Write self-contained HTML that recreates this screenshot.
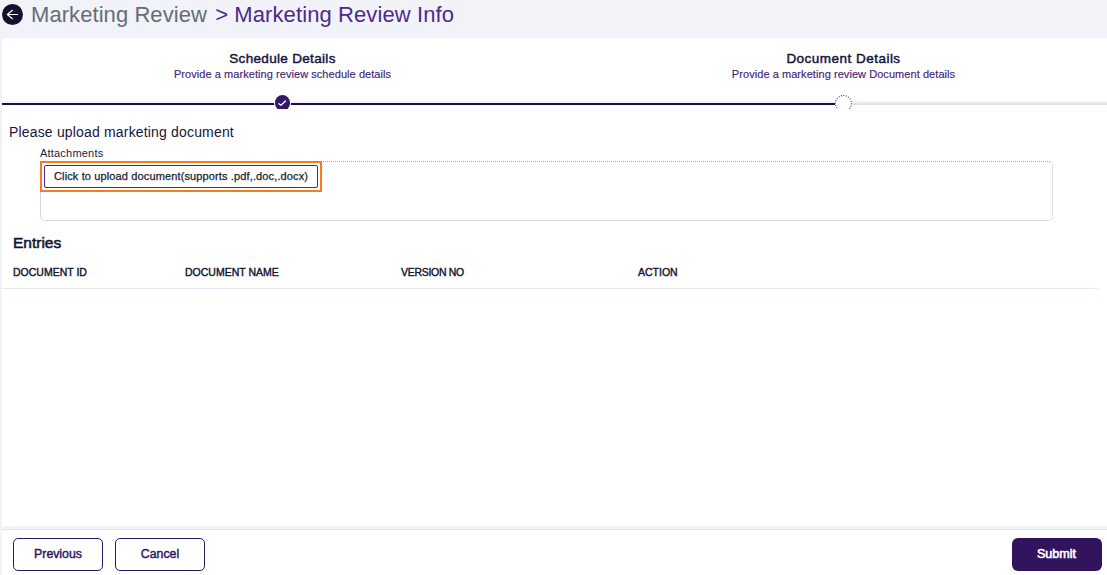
<!DOCTYPE html>
<html>
<head>
<meta charset="utf-8">
<style>
html,body{margin:0;padding:0;}
body{width:1107px;height:575px;overflow:hidden;position:relative;background:#f1f3f8;font-family:"Liberation Sans",sans-serif;}
.abs{position:absolute;}
.back{left:2px;top:4px;width:21px;height:21px;border-radius:50%;background:#12112e;}
.title{left:31px;top:0px;font-size:22px;line-height:30px;color:#676c78;white-space:nowrap;letter-spacing:0.07px;}
.title .p{color:#4d2a8c;margin-left:2px;letter-spacing:0.1px;}
.card{left:2px;top:38px;width:1122px;height:488px;background:#fff;border-radius:4px 0 0 0;overflow:hidden;}
.step{position:absolute;top:0;width:561px;text-align:center;}
.step h3{margin:0;position:absolute;left:0;right:0;font-weight:normal;-webkit-text-stroke:0.45px #15143a;font-size:13.5px;letter-spacing:0.32px;line-height:16px;top:13px;color:#15143a;}
.step p{margin:0;position:absolute;left:0;right:0;font-size:11px;line-height:13px;top:30px;color:#432573;letter-spacing:0.06px;-webkit-text-stroke:0.15px #432573;}
.stepper{left:0;top:0;width:1122px;height:71px;overflow:hidden;}
.track{left:0;top:63px;width:1122px;height:2px;background:#f1f3f8;}
.track2{left:0;top:65px;width:1122px;height:2px;background:#e1e1eb;}
.prog{left:0;top:65px;height:2px;background:#1e0a4c;}
.chk{left:272.5px;top:57px;width:15.5px;height:16px;border-radius:50%;background:#33176b;box-shadow:0 0 0 1px #fff;}
.dash{left:832px;top:56px;width:19px;height:19px;}
.txt1{left:7px;top:86px;font-size:14px;letter-spacing:0.17px;color:#17163a;white-space:nowrap;line-height:17px;}
.att{left:38px;top:109px;font-size:11px;letter-spacing:0.2px;color:#22213f;white-space:nowrap;line-height:13px;}
.dz{left:38px;top:123px;width:1011px;height:58px;border:1px dotted #a8a8b8;border-right-color:#bcbcca;border-bottom-color:#bcbcca;border-left:1px solid #d8d8e2;border-radius:5px;}
.ring{left:38px;top:123px;width:278px;height:26.5px;border:2px solid #f97a1f;}
.upbtn{left:42px;top:127px;width:272px;height:21px;border:1px solid #4c2792;border-radius:2px;background:#fff;}
.uptxt{left:52px;top:132px;font-size:11px;letter-spacing:0.13px;color:#1b1b2e;-webkit-text-stroke:0.25px #1b1b2e;white-space:nowrap;line-height:13px;}
.entries{left:11px;top:196px;font-size:15.5px;font-weight:normal;-webkit-text-stroke:0.55px #151432;color:#151432;line-height:18px;}
.th{top:228px;font-size:10.5px;font-weight:normal;-webkit-text-stroke:0.4px #151432;color:#151432;line-height:12px;white-space:nowrap;}
.tline{left:0;top:250px;width:1096px;height:1px;background:#e7e5f6;}
.footer{left:2px;top:529px;width:1122px;height:60px;background:#fff;border-top:1px solid #e4e4f7;}
.btn{top:538px;width:88px;height:30.5px;border:1.5px solid #2e1863;border-radius:5px;background:#fff;color:#2e1863;font-weight:normal;-webkit-text-stroke:0.45px #2e1863;font-size:12.3px;text-align:center;line-height:30.5px;text-indent:0px;}
.sub{left:1012px;top:538px;width:90px;height:33px;border-radius:6px;background:#32135e;color:#fff;font-weight:normal;-webkit-text-stroke:0.6px #fff;font-size:12.6px;text-align:center;line-height:33px;text-indent:-1px;}
</style>
</head>
<body>
<div class="abs back"><svg width="21" height="21" viewBox="0 0 21 21"><path d="M15.6 10.5H5.6M10.4 6.3L5.3 10.5L10.4 14.7" stroke="#fff" stroke-width="1.15" fill="none" stroke-linecap="round" stroke-linejoin="round"/></svg></div>
<div class="abs title">Marketing Review <span class="p">&gt; Marketing Review Info</span></div>
<div class="abs card">
  <div class="step" style="left:0"><h3>Schedule Details</h3><p>Provide a marketing review schedule details</p></div>
  <div class="step" style="left:561px"><h3 style="letter-spacing:0.48px">Document Details</h3><p>Provide a marketing review Document details</p></div>
  <div class="abs stepper">
    <div class="abs track"></div><div class="abs track2"></div>
    <div class="abs prog" style="width:833px"></div>
    <div class="abs chk"><svg width="16" height="16" viewBox="0 0 16 16"><path d="M3.9 8.7L5.9 10.2L10.5 6.0" stroke="#fff" stroke-width="1.35" fill="none" stroke-linecap="round" stroke-linejoin="round"/></svg></div>
    <div class="abs dash"><svg width="19" height="19" viewBox="0 0 19 19"><circle cx="9.5" cy="9.5" r="8.5" fill="#fff"/><circle cx="9.5" cy="9.5" r="8" fill="none" stroke="#5a3a9a" stroke-width="1.1" stroke-dasharray="1.1 1.41" transform="rotate(-92 9.5 9.5)"/></svg></div>
  </div>
  <div class="abs txt1">Please upload marketing document</div>
  <div class="abs att">Attachments</div>
  <div class="abs dz"></div>
  <div class="abs ring"></div>
  <div class="abs upbtn"></div>
  <div class="abs uptxt">Click to upload document(supports .pdf,.doc,.docx)</div>
  <div class="abs entries">Entries</div>
  <div class="abs th" style="left:11px">DOCUMENT ID</div>
  <div class="abs th" style="left:183px">DOCUMENT NAME</div>
  <div class="abs th" style="left:399px;letter-spacing:-0.3px">VERSION NO</div>
  <div class="abs th" style="left:636px">ACTION</div>
  <div class="abs tline"></div>
</div>
<div class="abs footer"></div>
<div class="abs btn" style="left:13px">Previous</div>
<div class="abs btn" style="left:115px">Cancel</div>
<div class="abs sub">Submit</div>
</body>
</html>
